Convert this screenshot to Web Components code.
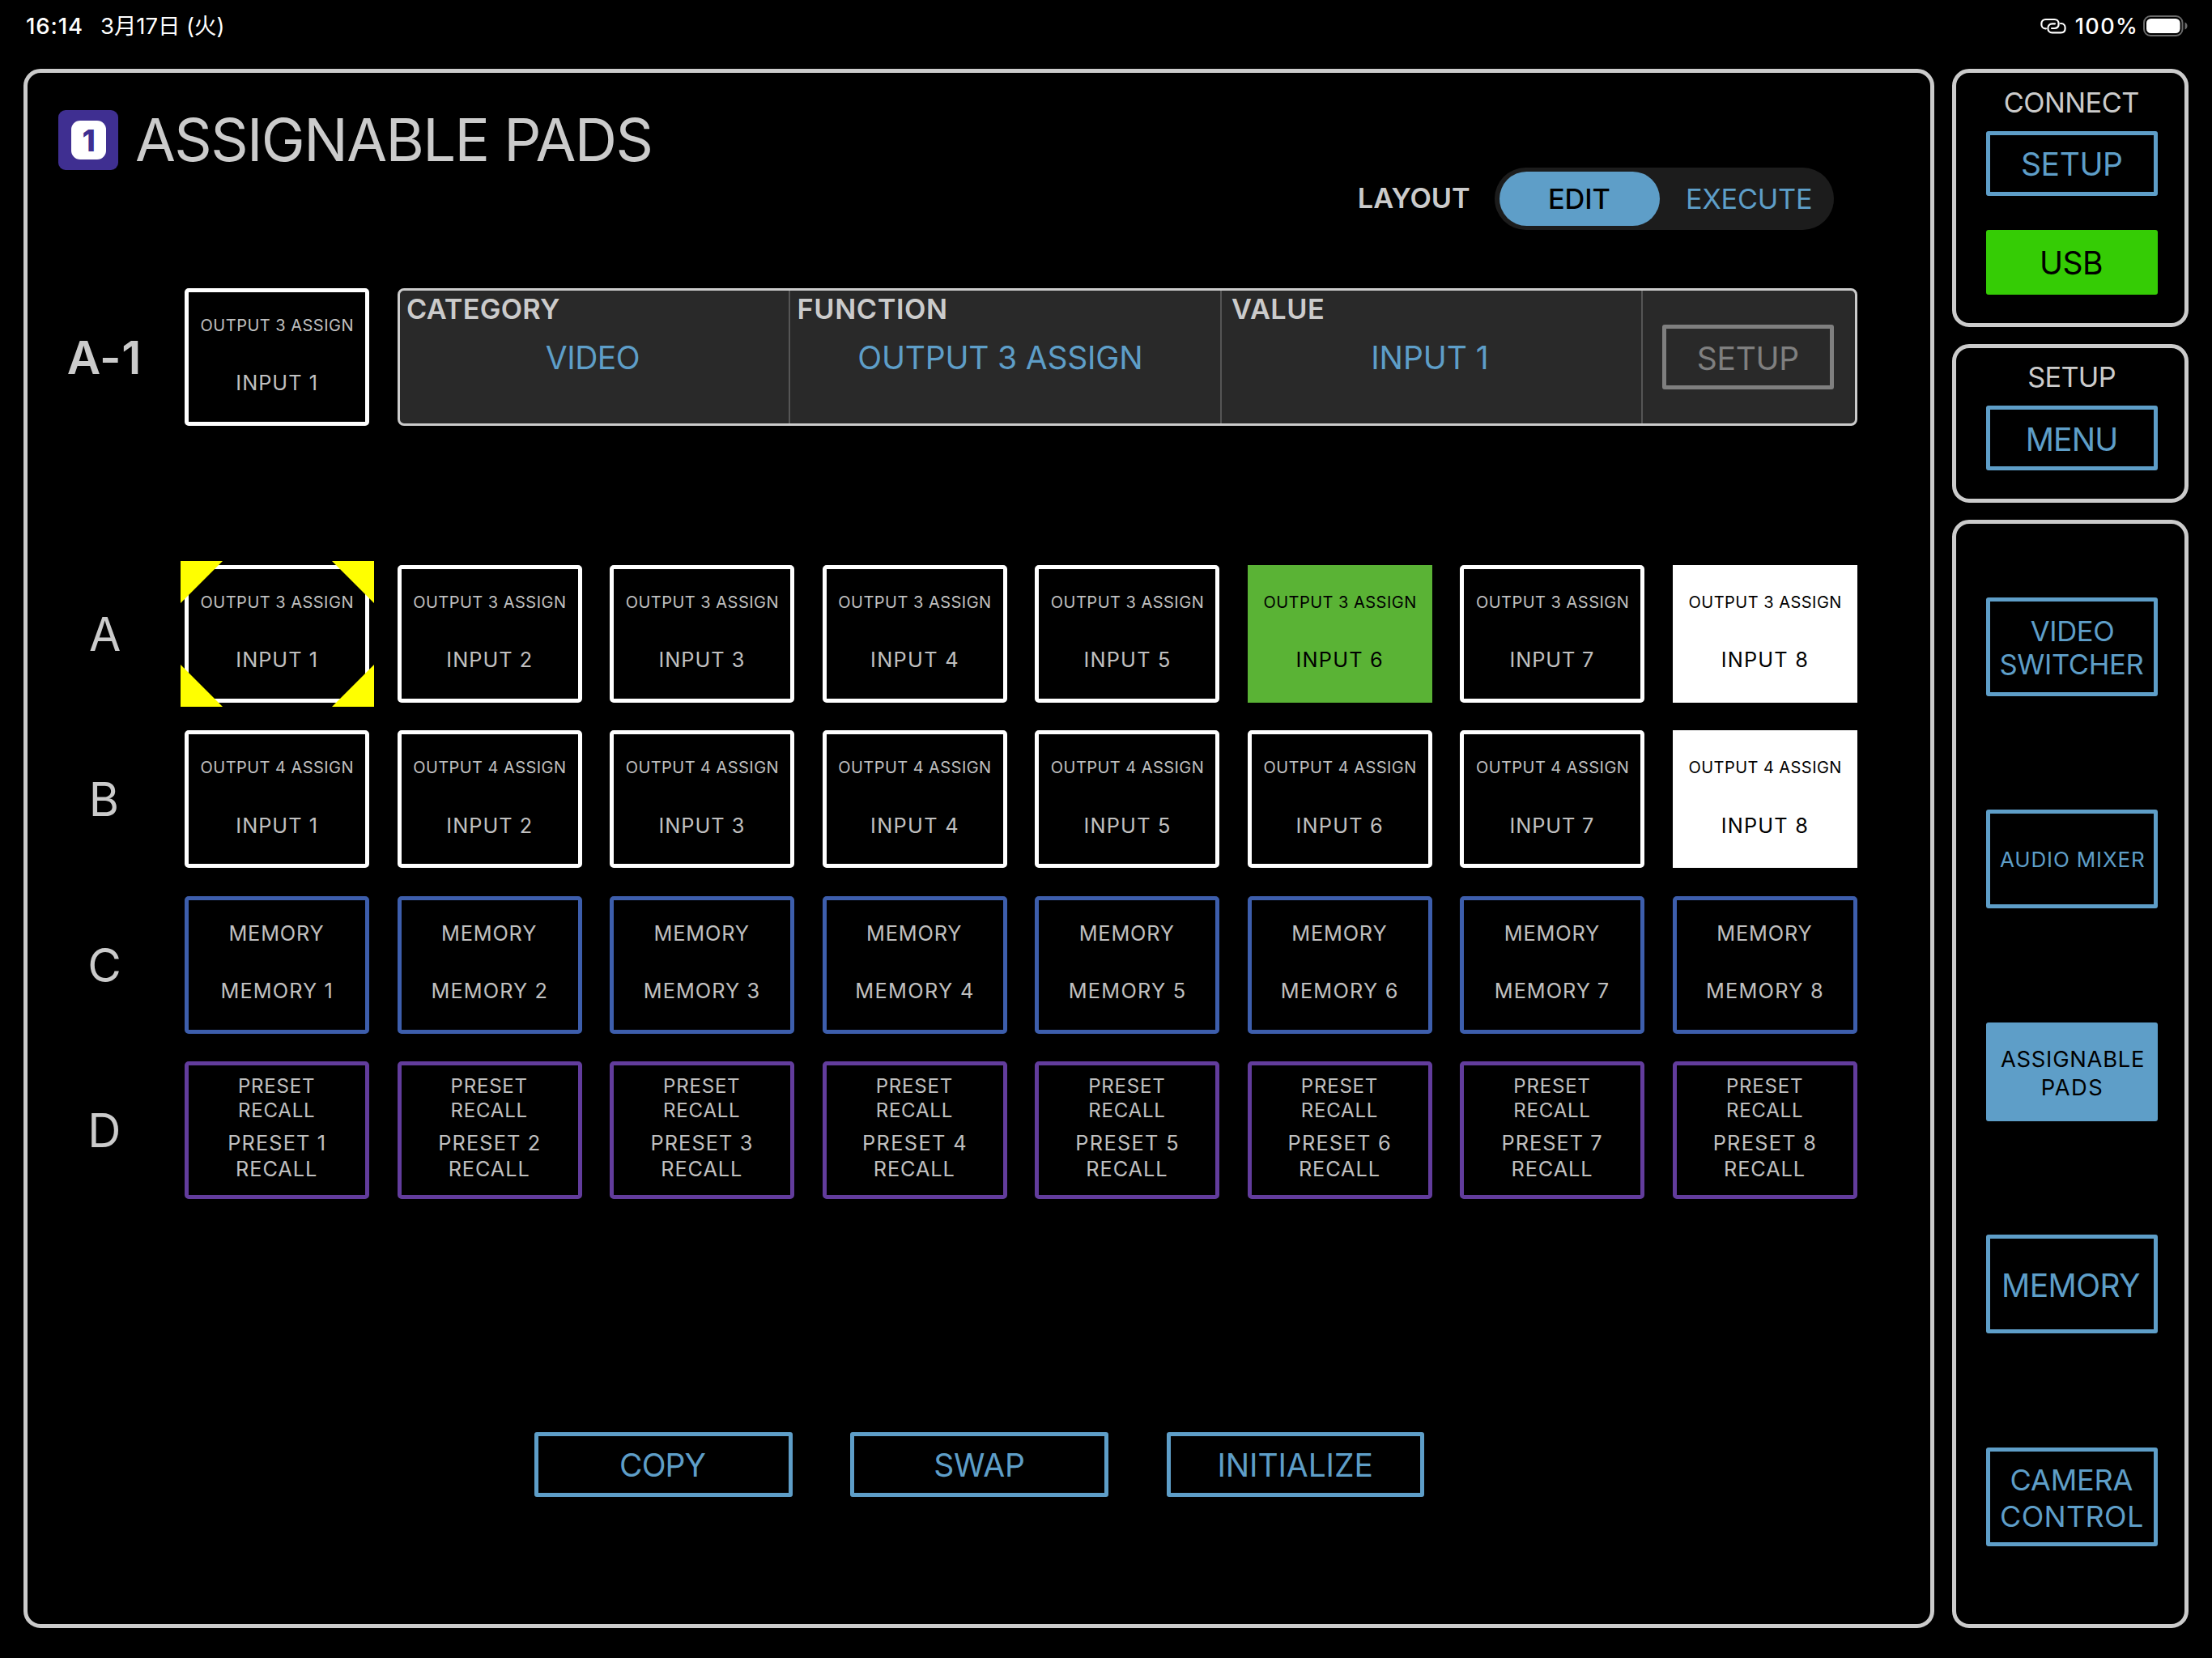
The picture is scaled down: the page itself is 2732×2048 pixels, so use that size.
<!DOCTYPE html>
<html lang="ja">
<head>
<meta charset="utf-8">
<title>ASSIGNABLE PADS</title>
<style>
  html, body { margin: 0; background: #000; }
  body { width: 2732px; height: 2048px; overflow: hidden; font-family: Inter, "Noto Sans CJK JP", sans-serif; color: #cbcbcb; }
</style>
</head>
<body>
<pad-app></pad-app>
<script>
const FAMILY = 'Inter, "Noto Sans CJK JP", sans-serif';
const ctx = document.createElement('canvas').getContext('2d');

function define(name, html, setup) {
  const tpl = document.createElement('template');
  tpl.innerHTML = html;
  customElements.define(name, class extends HTMLElement {
    constructor() {
      super();
      this.attachShadow({ mode: 'open' });
    }
    connectedCallback() {
      if (this.shadowRoot.childNodes.length) return;
      if (setup) setup(this, tpl);
      else this.shadowRoot.append(tpl.content.cloneNode(true));
    }
  });
}

/* One line of text, tracked so that its ink fills the width w. */
define('fit-text', `<style>
  :host { display: block; line-height: 1; white-space: nowrap; flex: none; text-align: left; }
  span { display: block; }
</style><span><slot></slot></span>`, (el, tpl) => {
  el.shadowRoot.append(tpl.content.cloneNode(true));
  const size = +el.getAttribute('size'), w = +el.getAttribute('w');
  const weight = el.getAttribute('weight') || 400;
  const text = el.textContent;
  ctx.font = `${weight} ${size}px ${FAMILY}`;
  const m = ctx.measureText(text);
  const ink = m.actualBoundingBoxLeft + m.actualBoundingBoxRight;
  const n = [...text].length;
  const span = el.shadowRoot.querySelector('span');
  Object.assign(el.style, { fontSize: size + 'px', fontWeight: weight, height: size + 'px', width: w + 'px' });
  span.style.marginLeft = m.actualBoundingBoxLeft + 'px';
  if (n > 1) span.style.letterSpacing = (w - ink) / (n - 1) + 'px';
});

define('status-bar', `<style>
  :host { display: flex; align-items: center; height: 64px; margin-bottom: 21px; padding: 0 30px 0 33px; color: #fff; }
  .date { margin-left: 24px; }
  .right { display: flex; align-items: center; margin-left: auto; }
  svg { display: block; }
  fit-text { margin-top: 1px; }
</style>
<fit-text size="27.5" weight="500" w="68">16:14</fit-text>
<fit-text class="date" size="27.5" weight="400" w="150.5">3月17日 (火)</fit-text>
<div class="right">
  <svg width="32" height="20" viewBox="32 30 96 60" fill="none" stroke="#fff" stroke-width="6.4" stroke-linecap="round">
    <path d="M53 70H51C41 70 36 62 36 53C36 43 42 36 52 36H84C94 36 100 43 100 52C100 62 94 69 84 69H74"/>
    <path d="M107 51H109C119 51 124 59 124 68C124 78 118 85 108 85H76C66 85 60 78 60 69C60 59 66 52 76 52H86"/>
  </svg>
  <fit-text style="margin-left:12px" size="27" weight="500" w="73.3">100%</fit-text>
  <svg style="margin-left:10px" width="55" height="26" viewBox="0 0 55 26">
    <rect x="1" y="1" width="47.5" height="24" rx="8" fill="none" stroke="#6b6b6b" stroke-width="2"/>
    <rect x="4" y="4" width="41.6" height="18" rx="5.5" fill="#fff"/>
    <path d="M51.5 8.5C55.5 10 55.5 16 51.5 17.5Z" fill="#6b6b6b"/>
  </svg>
</div>`);

define('ui-panel', `<style>
  :host { display: flex; flex-direction: column; box-sizing: border-box; border: 5.4px solid #cbcbcb; border-radius: 21px; }
</style><slot></slot>`);

define('ui-button', `<style>
  :host { display: flex; flex-direction: column; align-items: center; justify-content: center; flex: none;
    gap: var(--gap, 6px); box-sizing: border-box; width: var(--w, 212px); height: var(--h, 80px);
    padding-top: var(--drop, 2px); border: 5px solid #5e9ec8; border-radius: 3px; color: #5e9ec8; }
  :host([kind="on"]) { background: #5e9ec8; color: #000; }
  :host([kind="green"]) { background: #35cc05; border-color: #35cc05; color: #000; }
  :host([kind="off"]) { border-color: #7f7f7f; color: #7f7f7f; }
</style><slot></slot>`);

define('pad-tile', `<style>
  :host { display: grid; position: relative; grid-template-rows: 72px 70px; align-content: start; box-sizing: border-box; height: 170px;
    padding-top: 5px; border: 5px solid var(--line, #fff); border-radius: 5px; color: #c0c0c0; }
  :host([fill]) { border-radius: 0; background: var(--line); color: #000; }
  div { display: flex; flex-direction: column; align-items: center; justify-content: center; }
  .top { gap: 5.3px; }
  .bottom { gap: 6.7px; }
  svg { position: absolute; left: -10px; top: -10px; display: none; }
  :host([selected]) svg { display: block; }
</style>
<svg width="239" height="180" viewBox="0 0 239 180" fill="#ff0">
  <path d="M0 0H52L0 52ZM239 0H187L239 52ZM0 180H52L0 128ZM239 180H187L239 128Z"/>
</svg>
<div class="top"><slot name="top"></slot></div>
<div class="bottom"><slot></slot></div>`);

const DIGIT = { 1: 0, 2: 5.2, 3: 6, 4: 8, 5: 6.4, 6: 7.2, 7: 4.2, 8: 7.2 };
function tile(row, n) {
  const d = DIGIT[n];
  const sel = row === 'A' && n === 1 ? 'selected' : '';
  if (row === 'C') return `<pad-tile style="--line:#3d5eac">
    <fit-text slot="top" size="25.3" w="115.2">MEMORY</fit-text>
    <fit-text size="25.3" w="${134.8 + d}">MEMORY ${n}</fit-text></pad-tile>`;
  if (row === 'D') return `<pad-tile style="--line:#623c9c">
    <fit-text slot="top" size="24" w="92">PRESET</fit-text>
    <fit-text slot="top" size="24" w="92">RECALL</fit-text>
    <fit-text size="25.3" w="${117.4 + d}">PRESET ${n}</fit-text>
    <fit-text size="25.3" w="97.8">RECALL</fit-text></pad-tile>`;
  const fill = n === 8 ? 'fill style="--line:#fff"' : row === 'A' && n === 6 ? 'fill style="--line:#5ab335"' : '';
  return `<pad-tile ${sel} ${fill}>
    <fit-text slot="top" size="20" w="186.8">OUTPUT ${row === 'B' ? 4 : 3} ASSIGN</fit-text>
    <fit-text size="25.3" w="${97.3 + d}">INPUT ${n}</fit-text></pad-tile>`;
}

define('pad-row', '', el => {
  const row = el.getAttribute('name');
  const w = { A: 36, B: 31.5, C: 36.5, D: 34.5 }[row];
  const nudge = { A: 0, B: 3, C: 1, D: 3 }[row];
  el.shadowRoot.innerHTML = `<style>
    :host { display: grid; grid-template-columns: 159.43px repeat(8, 228px); column-gap: 34.57px; align-items: center; }
    .name { display: flex; justify-content: center; box-sizing: border-box; width: 190px; padding: 1px 0 0 ${nudge}px; }
  </style><div class="name"><fit-text size="57" w="${w}">${row}</fit-text></div>` +
    [1, 2, 3, 4, 5, 6, 7, 8].map(n => tile(row, n)).join('');
});

define('mode-switch', `<style>
  :host { display: flex; align-items: center; box-sizing: border-box; width: 419px; height: 77px; padding: 0 0 0 5.5px; border-radius: 39px; background: #1c1c1c; }
  .on, .off { display: flex; align-items: center; justify-content: center; box-sizing: border-box; height: 67px; padding-top: 2px; border-radius: 34px; }
  .on { width: 198.5px; background: #5e9ec8; color: #000; }
  .off { width: 215px; padding-left: 7px; color: #5e9ec8; }
</style>
<div class="on"><fit-text size="34.3" weight="500" w="73.7">EDIT</fit-text></div>
<div class="off"><fit-text size="34.3" w="151.8">EXECUTE</fit-text></div>`);

define('page-header', `<style>
  :host { display: flex; justify-content: space-between; height: 148px; margin: 46px 119px 0 38px; }
  .title { display: flex; align-items: center; gap: 22px; height: 74px; }
  .title > fit-text { margin-top: 1px; }
  .badge { display: flex; align-items: center; justify-content: center; width: 74px; height: 74px; border-radius: 9px; background: #3f2f91; color: #3f2f91; }
  .badge div { display: flex; align-items: center; justify-content: center; width: 43px; height: 48.6px; border-radius: 11px; background: #fff; }
  .mode { display: flex; align-items: center; align-self: flex-end; gap: 31px; }
</style>
<div class="title"><div class="badge"><div><fit-text size="37" weight="800" w="13">1</fit-text></div></div>
<fit-text size="72.4" w="635.5">ASSIGNABLE PADS</fit-text></div>
<div class="mode"><fit-text size="34.3" weight="600" w="136.2">LAYOUT</fit-text><mode-switch></mode-switch></div>`);

define('assign-editor', `<style>
  :host { display: flex; align-items: center; margin-top: 72px; height: 170px; }
  .name { display: flex; justify-content: center; width: 186px; margin-right: 8px; }
  pad-tile { width: 228px; }
  .bar { display: flex; box-sizing: border-box; width: 1803px; height: 170px; margin-left: 35px; border: 3px solid #cbcbcb; border-radius: 8px; background: #292929; }
  .cell { display: flex; flex-direction: column; align-items: center; box-sizing: border-box; padding-top: 6px; gap: 23px; border-right: 2px solid #555; }
  .cell fit-text:first-child { align-self: flex-start; margin-left: var(--inset, 9px); }
  .cell fit-text + fit-text { color: #5e9ec8; }
  ui-button { align-self: center; margin: 0 0 0 24px; }
</style>
<div class="name"><fit-text size="57" weight="600" w="86.6">A-1</fit-text></div>
<pad-tile><fit-text slot="top" size="20" w="186.8">OUTPUT 3 ASSIGN</fit-text><fit-text size="25.3" w="97.3">INPUT 1</fit-text></pad-tile>
<div class="bar">
  <div class="cell" style="width:481.5px;padding-right:5px"><fit-text size="34.3" weight="600" w="188">CATEGORY</fit-text><fit-text size="39" w="115">VIDEO</fit-text></div>
  <div class="cell" style="width:533.5px;padding-right:13px;--inset:11px"><fit-text size="34.3" weight="600" w="181.5">FUNCTION</fit-text><fit-text size="39" w="347">OUTPUT 3 ASSIGN</fit-text></div>
  <div class="cell" style="width:520px;padding-right:4px;--inset:12px"><fit-text size="34.3" weight="600" w="113">VALUE</fit-text><fit-text size="39" w="139.6">INPUT 1</fit-text></div>
  <ui-button kind="off"><fit-text size="39" w="122.3">SETUP</fit-text></ui-button>
</div>`);

define('main-view', `<style>
  :host { display: block; flex: none; width: 2360px; }
  ui-panel { height: 1926px; }
  .rows { display: grid; gap: 34.3px; margin-top: 172px; }
  .actions { display: flex; gap: 71.6px; margin: 288px 0 0 626px; --w: 318.7px; }
</style>
<ui-panel>
  <page-header></page-header>
  <assign-editor></assign-editor>
  <div class="rows"><pad-row name="A"></pad-row><pad-row name="B"></pad-row><pad-row name="C"></pad-row><pad-row name="D"></pad-row></div>
  <div class="actions">
    <ui-button><fit-text size="39" w="104.5">COPY</fit-text></ui-button>
    <ui-button><fit-text size="39" w="108.8">SWAP</fit-text></ui-button>
    <ui-button><fit-text size="39" w="187">INITIALIZE</fit-text></ui-button>
  </div>
</ui-panel>`);

define('side-nav', `<style>
  :host { display: flex; flex-direction: column; gap: 21px; width: 292px; }
  ui-panel { align-items: center; padding-left: 4px; }
  .connect { height: 319px; padding-top: 19.5px; }
  .connect ui-button { margin-top: 18px; }
  .connect ui-button + ui-button { margin-top: 42px; }
  .setup { height: 196px; padding-top: 18.5px; }
  .setup ui-button { margin-top: 18.5px; }
  .pages { height: 1369px; padding-top: 90.5px; gap: 140.6px; --h: 122px; }
</style>
<ui-panel class="connect">
  <fit-text size="34.3" w="164.3">CONNECT</fit-text>
  <ui-button><fit-text size="39" w="122">SETUP</fit-text></ui-button>
  <ui-button kind="green"><fit-text size="39" w="74">USB</fit-text></ui-button>
</ui-panel>
<ui-panel class="setup">
  <fit-text size="34.3" w="107.3">SETUP</fit-text>
  <ui-button><fit-text size="39" w="108.7">MENU</fit-text></ui-button>
</ui-panel>
<ui-panel class="pages">
  <ui-button style="--gap:6.3px;--drop:3px"><fit-text size="34.6" w="102.3">VIDEO</fit-text><fit-text size="34.6" w="177">SWITCHER</fit-text></ui-button>
  <ui-button><fit-text size="26" w="178">AUDIO MIXER</fit-text></ui-button>
  <ui-button kind="on" style="--gap:7.7px;--drop:5px"><fit-text size="27.3" w="176">ASSIGNABLE</fit-text><fit-text size="27.3" w="72.5">PADS</fit-text></ui-button>
  <ui-button><fit-text size="39" w="168">MEMORY</fit-text></ui-button>
  <ui-button style="--gap:9px;--drop:3px"><fit-text size="36" w="149">CAMERA</fit-text><fit-text size="36" w="174">CONTROL</fit-text></ui-button>
</ui-panel>`);

define('pad-app', `<style>
  :host { display: block; }
  main { display: flex; gap: 22px; padding-left: 29px; }
</style>
<status-bar></status-bar>
<main><main-view></main-view><side-nav></side-nav></main>`);
</script>
</body>
</html>
